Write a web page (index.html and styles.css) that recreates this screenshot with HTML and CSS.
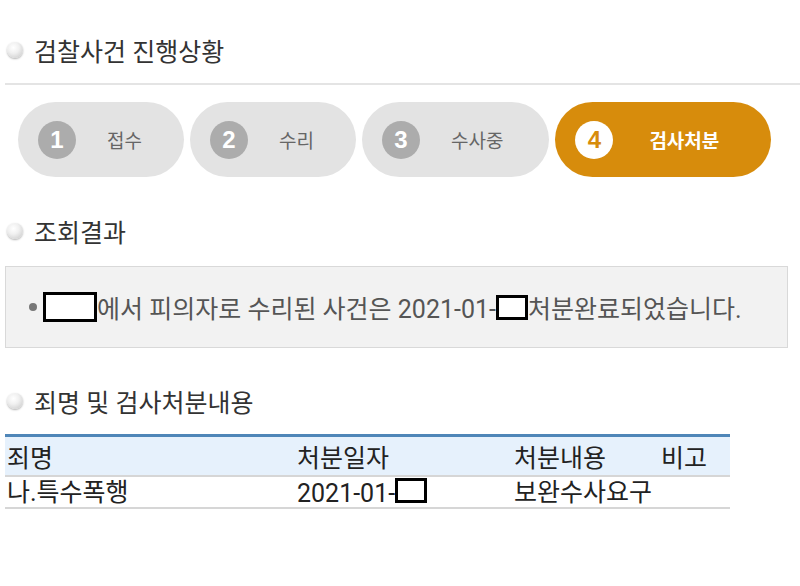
FILE: index.html
```html
<!DOCTYPE html>
<html lang="ko">
  <head>
    <meta charset="utf-8">
    <link rel="stylesheet" href="styles.css">
  </head>
  <body>
    <h2 class="sect first">검찰사건 진행상황</h2>
    <hr class="line">

    <div class="steps">
      <div class="step"><span class="num">1</span><span class="label">접수</span></div>
      <div class="step"><span class="num">2</span><span class="label">수리</span></div>
      <div class="step wide"><span class="num">3</span><span class="label">수사중</span></div>
      <div class="step on"><span class="num">4</span><span class="label">검사처분</span></div>
    </div>

    <h2 class="sect">조회결과</h2>
    <div class="result">
      <span class="dot"></span><span class="mask big"></span>에서 피의자로 수리된 사건은 2021-01-<span class="mask"></span>처분완료되었습니다.
    </div>

    <h2 class="sect">죄명 및 검사처분내용</h2>
    <table class="list">
      <tr>
        <th class="c1">죄명</th>
        <th class="c2">처분일자</th>
        <th class="c3">처분내용</th>
        <th class="c4">비고</th>
      </tr>
      <tr>
        <td>나.특수폭행</td>
        <td>2021-01-<span class="mask"></span></td>
        <td>보완수사요구</td>
        <td></td>
      </tr>
    </table>
  </body>
</html>
```

FILE: styles.css
```css
body {
  margin: 0;
  background: #fff;
  font-family: Roboto, "Noto Sans CJK KR", sans-serif;
  color: #333;
}
.sect {
  display: flex;
  align-items: center;
  margin: 0;
  padding: 0 0 0 7px;
  height: 40px;
  font-size: 25px;
  font-weight: 400;
  color: #333;
}
.sect::before {
  content: "";
  width: 16px;
  height: 16px;
  margin-right: 11px;
  border-radius: 50%;
  background: radial-gradient(circle at 40% 35%, #fff 0%, #f0f0f0 40%, #c4c4c4 100%);
  box-shadow: 0 1px 2px rgba(0,0,0,0.3);
}
.first {
  margin-top: 30px;
}
.line {
  margin: 13px 0 0 5px;
  border: 0;
  border-top: 2px solid #e4e4e4;
}
.steps {
  display: flex;
  gap: 6px;
  margin: 17px 0 0 18px;
}
.step {
  display: flex;
  align-items: center;
  height: 75px;
  padding: 0 42px 0 20px;
  border-radius: 38px;
  background: #e3e3e3;
}
.step.wide {
  padding-right: 46px;
}
.step .num {
  display: flex;
  align-items: center;
  justify-content: center;
  width: 38px;
  height: 38px;
  margin-right: 31px;
  border-radius: 50%;
  background: #acacac;
  color: #fff;
  font-family: "Liberation Sans", Arial, sans-serif;
  font-weight: bold;
  font-size: 24px;
}
.step .label {
  font-family: "Noto Sans CJK KR", sans-serif;
  font-size: 19px;
  color: #666;
}
.step.on {
  background: #d78c0c;
  padding-right: 52px;
}
.step.on .num {
  background: #fff;
  color: #d78c0c;
  margin-right: 36px;
}
.step.on .label {
  color: #fff;
  font-weight: bold;
}
.steps + .sect {
  margin-top: 34px;
}
.result {
  margin: 15px 12px 0 5px;
  height: 80px;
  display: flex;
  align-items: center;
  padding-left: 23px;
  background: #f2f2f2;
  border: 1px solid #d9d9d9;
  font-size: 25px;
  color: #555;
  white-space: nowrap;
}
.dot {
  width: 8px;
  height: 8px;
  margin-right: 6px;
  border-radius: 50%;
  background: #777;
}
.mask {
  display: inline-block;
  width: 26px;
  height: 19px;
  border: 3px solid #000;
  background: #fff;
  vertical-align: -2px;
}
.mask.big {
  width: 48px;
  height: 24px;
  vertical-align: -6px;
}
.result + .sect {
  margin-top: 33px;
}
.list {
  margin: 13px 0 0 5px;
  width: 725px;
  border-collapse: collapse;
  font-size: 25px;
  color: #222;
}
.list th {
  height: 38px;
  padding: 0 0 0 2px;
  text-align: left;
  font-weight: 400;
  background: #e6f1fc;
  border-top: 3px solid #4f86b8;
  border-bottom: 2px solid #d6d6d6;
}
.list td {
  height: 30px;
  padding: 0 0 0 2px;
  line-height: 1;
  border-bottom: 2px solid #d6d6d6;
}
.list td .mask {
  vertical-align: -1px;
}
.c1 { width: 288px; }
.c2 { width: 215px; }
.c3 { width: 145px; }
```
